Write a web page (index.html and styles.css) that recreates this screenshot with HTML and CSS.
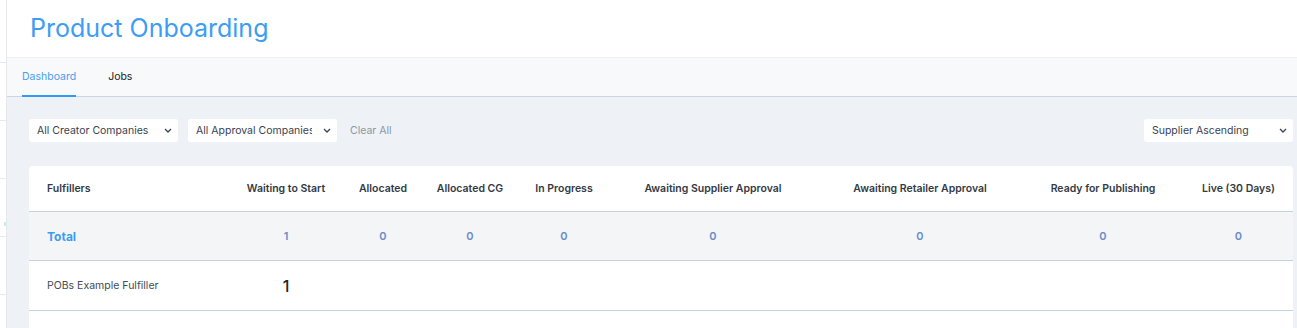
FILE: index.html
```html
<!DOCTYPE html>
<html lang="en">
<head>
  <meta charset="UTF-8">
  <title>Product Onboarding</title>
  <link rel="stylesheet" href="styles.css">
</head>
<body>

  <div class="sidebar">
    <div class="side-item first"></div>
    <div class="side-item"></div>
    <div class="side-item"></div>
    <div class="side-item"><span class="side-mark"></span></div>
    <div class="side-item"></div>
  </div>

  <div class="page">
    <header>
      <h1>Product Onboarding</h1>
    </header>

    <nav class="tabs">
      <a href="#" class="tab active">Dashboard</a>
      <a href="#" class="tab">Jobs</a>
    </nav>

    <main class="content">
      <div class="filters">
        <div class="select">
          <span>All Creator Companies</span>
          <svg class="chev" width="8" height="5" viewBox="0 0 8 5"><path d="M1 1l3 3 3-3" fill="none" stroke="#3a4250" stroke-width="1.3"/></svg>
        </div>
        <div class="select">
          <span>All Approval Companies</span>
          <svg class="chev" width="8" height="5" viewBox="0 0 8 5"><path d="M1 1l3 3 3-3" fill="none" stroke="#3a4250" stroke-width="1.3"/></svg>
        </div>
        <a href="#" class="clear-all">Clear All</a>
        <div class="select sort">
          <span>Supplier Ascending</span>
          <svg class="chev" width="8" height="5" viewBox="0 0 8 5"><path d="M1 1l3 3 3-3" fill="none" stroke="#3a4250" stroke-width="1.3"/></svg>
        </div>
      </div>

      <div class="card">
        <table class="jobs-table">
          <colgroup>
            <col style="width:209px">
            <col style="width:96px">
            <col style="width:98px">
            <col style="width:76px">
            <col style="width:112px">
            <col style="width:186px">
            <col style="width:228px">
            <col style="width:138px">
            <col style="width:121px">
          </colgroup>
          <thead>
            <tr>
              <th class="name-col">Fulfillers</th>
              <th>Waiting to Start</th>
              <th>Allocated</th>
              <th>Allocated CG</th>
              <th>In Progress</th>
              <th>Awaiting Supplier Approval</th>
              <th>Awaiting Retailer Approval</th>
              <th>Ready for Publishing</th>
              <th class="last-col">Live (30 Days)</th>
            </tr>
          </thead>
          <tbody>
            <tr class="total-row">
              <td class="name-col"><a href="#">Total</a></td>
              <td>1</td>
              <td>0</td>
              <td>0</td>
              <td>0</td>
              <td>0</td>
              <td>0</td>
              <td>0</td>
              <td class="last-col">0</td>
            </tr>
            <tr class="item-row">
              <td class="name-col">POBs Example Fulfiller</td>
              <td class="big">1</td>
              <td></td>
              <td></td>
              <td></td>
              <td></td>
              <td></td>
              <td></td>
              <td class="last-col"></td>
            </tr>
            <tr class="empty-row">
              <td colspan="9"></td>
            </tr>
          </tbody>
        </table>
      </div>
    </main>
  </div>

</body>
</html>
```

FILE: styles.css
```css
body {
  margin: 0;
  display: flex;
  height: 328px;
  overflow: hidden;
  background-color: #fff;
  font-family: 'Inter', 'Liberation Sans', sans-serif;
  color: #333a44;
}

/* thin sidebar remnant on the left */
.sidebar {
  width: 6px;
  border-right: 1px solid #e6e8eb;
  background-color: #fff;
}

.side-item {
  height: 57px;
  border-bottom: 1px solid #e8e9ec;
  position: relative;
}

.side-item.first {
  height: 62px;
}

.side-mark {
  position: absolute;
  right: 0;
  top: 43px;
  width: 2px;
  height: 4px;
  background-color: #bfeff5;
}

.page {
  flex: 1;
  display: flex;
  flex-direction: column;
}

header {
  height: 57px;
  display: flex;
  align-items: center;
  padding-left: 23px;
  border-bottom: 1px solid #efefef;
}

header h1 {
  margin: 0 0 2px;
  font-size: 25px;
  font-weight: 400;
  color: #3d9df2;
}

.tabs {
  height: 38px;
  display: flex;
  padding-left: 15px;
  background-color: #f8f9fb;
  border-bottom: 1px solid #c9d5e6;
}

.tab {
  display: flex;
  align-items: center;
  margin-right: 32px;
  font-size: 10.5px;
  color: #222;
  text-decoration: none;
  border-bottom: 2px solid transparent;
  margin-bottom: -1px;
}

.tab.active {
  color: #4a9ef0;
  border-bottom-color: #2f9bf5;
}

.content {
  flex: 1;
  background-color: #eef1f5;
  padding: 22px 4px 0 22px;
}

.filters {
  display: flex;
  align-items: center;
  gap: 10px;
  height: 23px;
}

.select {
  width: 149px;
  height: 23px;
  box-sizing: border-box;
  background-color: #fff;
  border-radius: 3px;
  display: flex;
  align-items: center;
  justify-content: space-between;
  padding: 0 6px 0 8px;
  font-size: 10.5px;
  color: #3a4250;
  white-space: nowrap;
  overflow: hidden;
}

.select span {
  overflow: hidden;
  width: 116px;
  margin-right: auto;
}

.chev {
  flex-shrink: 0;
}

.clear-all {
  margin-left: 3px;
  font-size: 10.5px;
  color: #8a97a8;
  text-decoration: none;
}

.select.sort {
  margin-left: auto;
}

.card {
  margin-top: 24px;
  background-color: #fff;
  border-radius: 4px 4px 0 0;
  height: 162px;
  overflow: hidden;
}

.jobs-table {
  width: 1264px;
  table-layout: fixed;
  border-collapse: collapse;
}

.jobs-table th {
  height: 45px;
  font-size: 10.5px;
  font-weight: 600;
  color: #333a44;
  text-align: center;
  padding: 0;
  border-bottom: 1px solid #c6d3e2;
  white-space: nowrap;
}

.jobs-table td {
  text-align: center;
  padding: 0;
  border-bottom: 1px solid #c6d3e2;
}

.jobs-table .name-col {
  text-align: left;
  padding-left: 18px;
}

.jobs-table .last-col {
  padding-left: 12px;
}

.total-row td {
  height: 48px;
  background-color: #f4f5f7;
  font-size: 11px;
  font-weight: 600;
  color: #6b8cc8;
}

.total-row a {
  font-size: 12px;
  font-weight: 700;
  color: #3d9bf0;
  text-decoration: none;
}

.item-row td {
  height: 49px;
  font-size: 10.5px;
  color: #444b55;
}

.item-row td.big {
  font-size: 16px;
  font-weight: 500;
  color: #222;
  line-height: 12px;
}

.empty-row td {
  height: 18px;
  border-bottom: none;
}
```
